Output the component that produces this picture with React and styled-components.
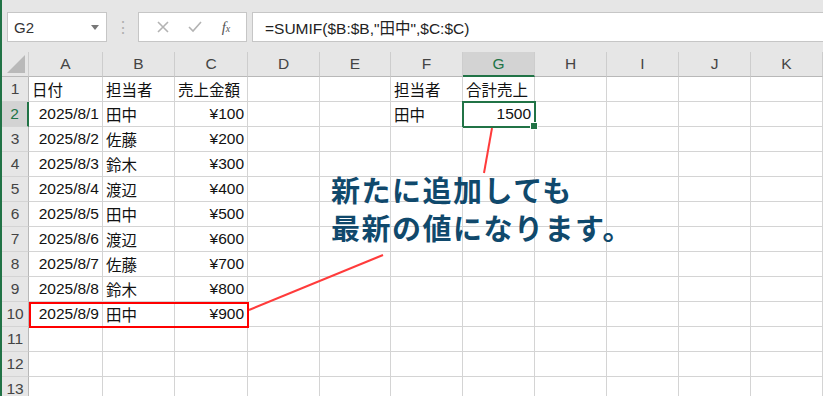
import React from "react";
import styled, { createGlobalStyle } from "styled-components";

const GlobalStyle = createGlobalStyle`
  html, body {
    margin: 0;
    padding: 0;
    overflow: hidden;
    background: #ffffff;
  }
`;

const COLS = ["A", "B", "C", "D", "E", "F", "G", "H", "I", "J", "K"];

const rows = [
  ["日付", "担当者", "売上金額", "", "", "担当者", "合計売上"],
  ["2025/8/1", "田中", "¥100", "", "", "田中", "1500"],
  ["2025/8/2", "佐藤", "¥200"],
  ["2025/8/3", "鈴木", "¥300"],
  ["2025/8/4", "渡辺", "¥400"],
  ["2025/8/5", "田中", "¥500"],
  ["2025/8/6", "渡辺", "¥600"],
  ["2025/8/7", "佐藤", "¥700"],
  ["2025/8/8", "鈴木", "¥800"],
  ["2025/8/9", "田中", "¥900"],
  [],
  [],
  [],
];

const FONT = `"Liberation Sans", "Noto Sans CJK JP", sans-serif`;

const App = () => {
  return (
    <>
      <GlobalStyle />
      <Window>
        <FormulaBar>
          <NameBox>
            <span>G2</span>
            <Caret />
          </NameBox>
          <Grip>⋮</Grip>
          <FuncBox>
            <svg width="12" height="12" viewBox="0 0 12 12">
              <path d="M1 1 L11 11 M11 1 L1 11" stroke="#b3b3b3" strokeWidth="1.6" />
            </svg>
            <svg width="14" height="12" viewBox="0 0 14 12">
              <path d="M1 6 L5 10 L13 1" stroke="#b3b3b3" strokeWidth="1.6" fill="none" />
            </svg>
            <Fx>
              f<sub>x</sub>
            </Fx>
          </FuncBox>
          <FormulaInput>=SUMIF($B:$B,"田中",$C:$C)</FormulaInput>
        </FormulaBar>

        <Sheet>
          <Corner>
            <svg width="18" height="18" viewBox="0 0 18 18">
              <path d="M18 0 L18 18 L0 18 Z" fill="#b9b9b9" />
            </svg>
          </Corner>
          {COLS.map((c) => (
            <ColHead key={c} $active={c === "G"}>
              {c}
            </ColHead>
          ))}
          {rows.map((r, i) => (
            <React.Fragment key={i}>
              <RowHead $active={i === 1}>{i + 1}</RowHead>
              {COLS.map((c, j) => {
                const v = r[j] || "";
                const right = i > 0 && (j === 0 || j === 2 || j === 6);
                return (
                  <Cell key={c} $right={right} $selected={i === 1 && j === 6}>
                    {v}
                  </Cell>
                );
              })}
            </React.Fragment>
          ))}
        </Sheet>

        <Marks width="823" height="396" viewBox="0 0 823 396">
          <rect x="30" y="303" width="218" height="24" fill="none" stroke="#ff0000" strokeWidth="2" />
          <line x1="492" y1="128" x2="484" y2="173" stroke="#ff3b3b" strokeWidth="2" />
          <line x1="249" y1="310" x2="383" y2="255" stroke="#ff3b3b" strokeWidth="2" />
        </Marks>

        <Note>
          <NoteLine>新たに追加しても</NoteLine>
          <NoteLine>最新の値になります。</NoteLine>
        </Note>
      </Window>
    </>
  );
};

export default App;

const Window = styled.div`
  position: relative;
  width: 821px;
  height: 396px;
  border-left: 2px solid #217346;
  background: #e6e6e6;
  display: flex;
  flex-direction: column;
  overflow: hidden;
  font-family: ${FONT};
  > * {
    flex-shrink: 0;
  }
`;

const FormulaBar = styled.div`
  display: flex;
  height: 30px;
  margin-top: 12px;
  margin-bottom: 10px;
  padding-left: 5px;
`;

const NameBox = styled.div`
  box-sizing: border-box;
  width: 100px;
  background: #fff;
  border: 1px solid #c6c6c6;
  display: flex;
  align-items: center;
  justify-content: space-between;
  padding: 0 7px 0 6px;
  font-size: 15px;
  color: #333;
`;

const Caret = styled.span`
  width: 0;
  height: 0;
  border-left: 4px solid transparent;
  border-right: 4px solid transparent;
  border-top: 5px solid #777;
`;

const Grip = styled.div`
  width: 31px;
  display: flex;
  align-items: center;
  justify-content: center;
  color: #b0b0b0;
  font-size: 16px;
`;

const FuncBox = styled.div`
  box-sizing: border-box;
  width: 109px;
  background: #fff;
  border: 1px solid #c6c6c6;
  display: flex;
  align-items: center;
  justify-content: space-around;
  padding: 0 6px 0 8px;
`;

const Fx = styled.span`
  font-family: "Liberation Serif", serif;
  font-style: italic;
  font-size: 15px;
  color: #555;
  sub {
    font-size: 10px;
    vertical-align: 0;
  }
`;

const FormulaInput = styled.div`
  flex: 1;
  margin-left: 5px;
  background: #fff;
  border: 1px solid #c6c6c6;
  border-right: none;
  display: flex;
  align-items: center;
  padding-left: 12px;
  font-size: 15.5px;
  color: #222;
`;

const Sheet = styled.div`
  display: grid;
  grid-template-columns: 27px 74px 72px 73px 72px 71px repeat(6, 72px);
  grid-auto-rows: 25px;
  background: #fff;
  font-size: 15.5px;
`;

const Corner = styled.div`
  box-sizing: border-box;
  background: #e6e6e6;
  border-right: 1px solid #cdcdcd;
  border-bottom: 1px solid #b8b8b8;
  display: flex;
  align-items: flex-end;
  justify-content: flex-end;
  padding: 0 3px 3px 0;
`;

const ColHead = styled.div`
  box-sizing: border-box;
  background: ${(p) => (p.$active ? "#d3d3d3" : "#e6e6e6")};
  color: ${(p) => (p.$active ? "#217346" : "#444")};
  border-right: 1px solid #cdcdcd;
  border-bottom: ${(p) => (p.$active ? "2px solid #217346" : "1px solid #b8b8b8")};
  display: flex;
  align-items: center;
  justify-content: center;
`;

const RowHead = styled.div`
  box-sizing: border-box;
  background: ${(p) => (p.$active ? "#d3d3d3" : "#e6e6e6")};
  color: ${(p) => (p.$active ? "#217346" : "#444")};
  border-right: ${(p) => (p.$active ? "2px solid #217346" : "1px solid #b8b8b8")};
  border-bottom: 1px solid #d4d4d4;
  display: flex;
  align-items: center;
  justify-content: center;
`;

const Cell = styled.div`
  position: relative;
  box-sizing: border-box;
  border-right: 1px solid #d4d4d4;
  border-bottom: 1px solid #d4d4d4;
  display: flex;
  align-items: center;
  justify-content: ${(p) => (p.$right ? "flex-end" : "flex-start")};
  padding: 0 3px;
  color: #111;
  white-space: nowrap;
  ${(p) =>
    p.$selected &&
    `
    &::after {
      content: "";
      position: absolute;
      left: -1px;
      top: -1px;
      right: -2px;
      bottom: -2px;
      border: 2px solid #217346;
    }
    &::before {
      content: "";
      position: absolute;
      right: -4px;
      bottom: -4px;
      width: 6px;
      height: 6px;
      background: #217346;
      border: 1px solid #fff;
      z-index: 1;
    }
  `}
`;

const Marks = styled.svg`
  position: absolute;
  left: -2px;
  top: 0;
  pointer-events: none;
`;

const Note = styled.div`
  position: absolute;
  left: 329px;
  top: 172px;
  display: flex;
  flex-direction: column;
  gap: 4px;
  font-family: "Noto Sans CJK JP", sans-serif;
  font-weight: 700;
  font-size: 29px;
  letter-spacing: 1.5px;
  color: #10496c;
`;

const NoteLine = styled.div`
  line-height: 34px;
  white-space: nowrap;
`;
